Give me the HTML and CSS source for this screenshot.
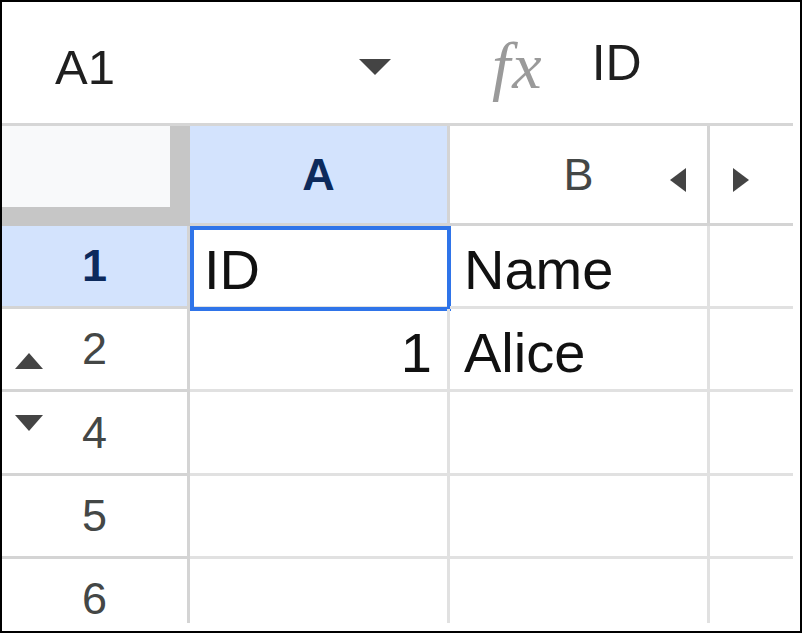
FILE: index.html
```html
<!DOCTYPE html>
<html lang="en">
<head>
  <meta charset="UTF-8">
  <title>Sheet</title>
  <link rel="stylesheet" href="styles.css">
</head>
<body>
  <div class="frame">
    <!-- name box + formula bar -->
    <div class="formula-bar">
      <div class="name-box">
        <span class="cell-ref">A1</span>
        <svg class="caret" width="32" height="16" viewBox="0 0 32 16"><polygon points="0,0 32,0 16,16" fill="#444"/></svg>
      </div>
      <span class="fx">fx</span>
      <span class="formula">ID</span>
    </div>

    <!-- grid -->
    <div class="sheet">
      <div class="corner"></div>
      <div class="col-head selected">A</div>
      <div class="col-head">B
        <svg class="arrow arrow-left" width="16" height="24" viewBox="0 0 16 24"><polygon points="16,0 16,24 0,12" fill="#444"/></svg>
      </div>
      <div class="col-head edge">
        <svg class="arrow arrow-right" width="16" height="24" viewBox="0 0 16 24"><polygon points="0,0 0,24 16,12" fill="#444"/></svg>
      </div>

      <div class="row-head selected">1</div>
      <div class="cell active">ID</div>
      <div class="cell">Name</div>
      <div class="cell edge"></div>

      <div class="row-head">2
        <svg class="fold fold-up" width="28" height="16" viewBox="0 0 28 16"><polygon points="0,16 28,16 14,0" fill="#444"/></svg>
      </div>
      <div class="cell num">1</div>
      <div class="cell">Alice</div>
      <div class="cell edge"></div>

      <div class="row-head">4
        <svg class="fold fold-down" width="28" height="16" viewBox="0 0 28 16"><polygon points="0,0 28,0 14,16" fill="#444"/></svg>
      </div>
      <div class="cell"></div>
      <div class="cell"></div>
      <div class="cell edge"></div>

      <div class="row-head">5</div>
      <div class="cell"></div>
      <div class="cell"></div>
      <div class="cell edge"></div>

      <div class="row-head">6</div>
      <div class="cell"></div>
      <div class="cell"></div>
      <div class="cell edge"></div>
    </div>
  </div>
</body>
</html>
```

FILE: styles.css
```css
body {
  margin: 0;
  font-family: "Liberation Sans", Arial, sans-serif;
  background: #fff;
  color: #1f1f1f;
}
.frame {
  width: 802px;
  height: 633px;
  box-sizing: border-box;
  border: 2px solid #000;
  overflow: hidden;
  background: #fff;
}

/* 수식 입력줄 */
.formula-bar {
  display: flex;
  align-items: center;
  height: 121px;
}
.name-box {
  width: 389px;
  box-sizing: border-box;
  padding-left: 53px;
  display: flex;
  align-items: center;
  justify-content: space-between;
}
.cell-ref {
  font-size: 49px;
  line-height: 52px;
  margin-top: 8px;
}
.caret {
  display: block;
  margin-top: 8px;
}
.fx {
  font-family: "Liberation Serif", "Times New Roman", serif;
  font-style: italic;
  font-size: 66px;
  line-height: 66px;
  letter-spacing: 2px;
  color: #9a9a9a;
  margin-left: 101px;
  margin-top: 6px;
}
.formula {
  font-size: 50px;
  line-height: 52px;
  margin-left: 48px;
}

/* 시트 그리드 */
.sheet {
  width: 791px;
  height: 497px;
  overflow: hidden;
  border-top: 3px solid #d6d6d6;
  display: grid;
  grid-template-columns: 188px 260px 260px 83px;
  grid-template-rows: 100px 83px 83px 84px 83px 83px;
}
.corner {
  background: #f8f9fa;
  border-right: 20px solid #c6c6c6;
  border-bottom: 19px solid #c6c6c6;
}
.col-head,
.row-head,
.cell {
  box-sizing: border-box;
  position: relative;
}
.col-head {
  display: flex;
  align-items: center;
  justify-content: center;
  font-size: 45px;
  color: #444746;
  border-right: 3px solid #d4d4d4;
  border-bottom: 3px solid #d4d4d4;
}
.row-head {
  display: flex;
  align-items: center;
  justify-content: center;
  font-size: 45px;
  color: #444746;
  border-right: 3px solid #d4d4d4;
  border-bottom: 3px solid #d4d4d4;
}
.col-head.selected,
.row-head.selected {
  background: #d3e3fd;
  color: #0c2a5c;
  font-weight: bold;
}
.cell {
  display: flex;
  align-items: flex-end;
  padding: 0 15px 6px 14px;
  font-size: 56px;
  line-height: 60px;
  color: #111;
  border-right: 3px solid #e1e1e1;
  border-bottom: 3px solid #e1e1e1;
}
.cell.num {
  justify-content: flex-end;
}
.edge {
  border-right: none;
}
.cell.active::after {
  content: "";
  position: absolute;
  left: 0;
  top: 0;
  width: 261px;
  height: 85px;
  box-sizing: border-box;
  border: 4px solid #2f74e9;
}

/* 겹쳐 그리는 화살표 */
.arrow {
  position: absolute;
  top: 42px;
}
.arrow-left {
  left: 220px;
}
.arrow-right {
  left: 23px;
}
.fold {
  position: absolute;
  left: 13px;
}
.fold-up {
  top: 44px;
}
.fold-down {
  top: 23px;
}
```
